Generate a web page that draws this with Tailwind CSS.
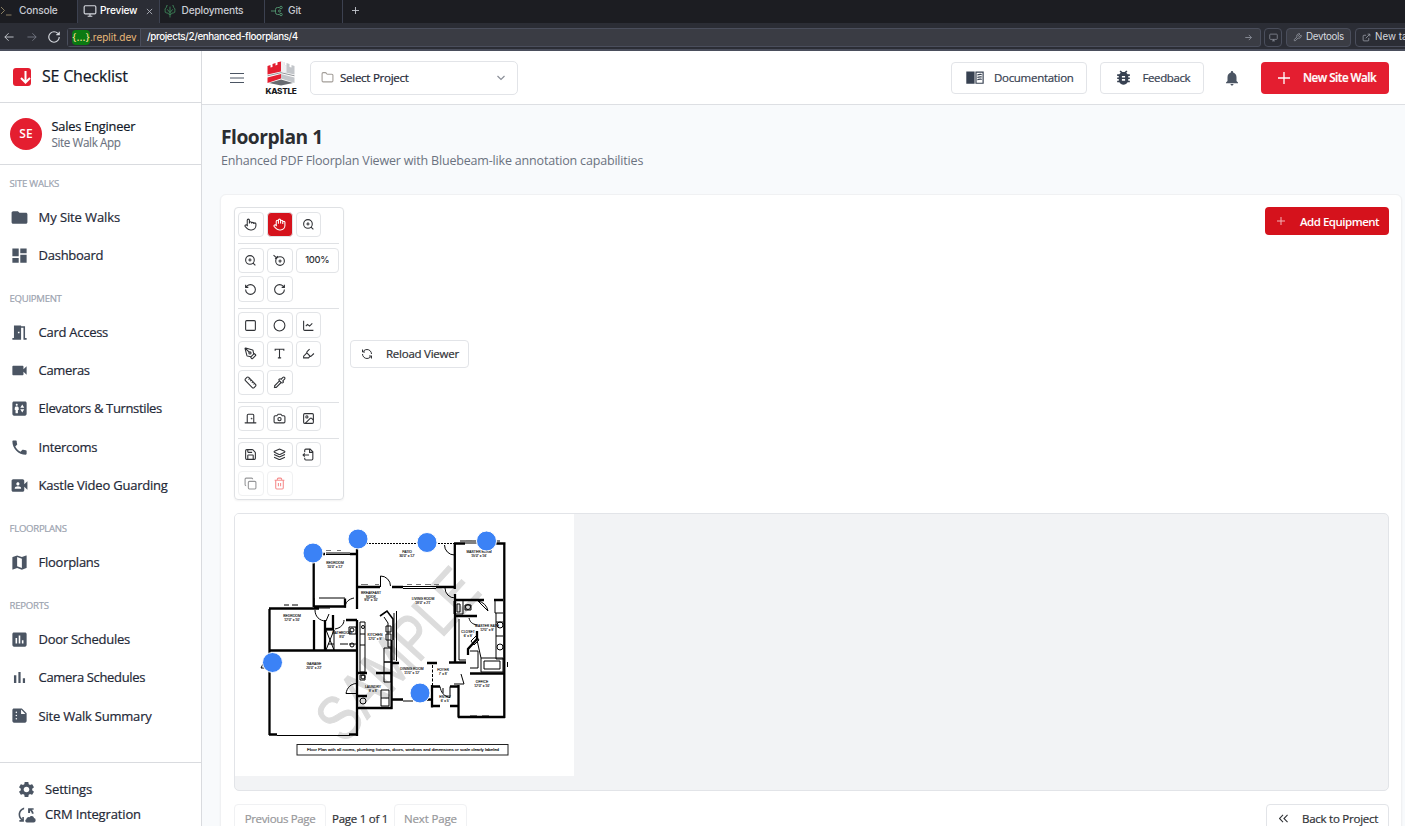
<!DOCTYPE html>
<html lang="en">
<head>
<meta charset="utf-8">
<title>SE Checklist</title>
<script src="https://cdn.jsdelivr.net/npm/@tailwindcss/browser@4"></script>
</head>
<body class="h-[826px] w-[1405px] overflow-hidden bg-white font-['Open_Sans',sans-serif] text-[#1f2937]">
<svg class="hidden">
  <symbol id="folder" viewBox="0 0 24 24"><path d="M10 4H4c-1.1 0-1.99.9-1.99 2L2 18c0 1.1.9 2 2 2h16c1.1 0 2-.9 2-2V8c0-1.1-.9-2-2-2h-8l-2-2z"/></symbol>
  <symbol id="dash" viewBox="0 0 24 24"><path d="M3 13h8V3H3v10zm0 8h8v-6H3v6zm10 0h8V11h-8v10zm0-18v6h8V3h-8z"/></symbol>
  <symbol id="room" viewBox="0 0 24 24"><path d="M14 6v15H3v-2h2V3h9v1h5v15h2v2h-4V6h-3zm-4 5v2h2v-2h-2z"/></symbol>
  <symbol id="cam" viewBox="0 0 24 24"><path d="M17 10.5V7c0-.55-.45-1-1-1H4c-.55 0-1 .45-1 1v10c0 .55.45 1 1 1h12c.55 0 1-.45 1-1v-3.5l4 4v-11l-4 4z"/></symbol>
  <symbol id="elev" viewBox="0 0 24 24"><path d="M19 3H5c-1.1 0-2 .9-2 2v14c0 1.1.9 2 2 2h14c1.1 0 2-.9 2-2V5c0-1.1-.9-2-2-2zM8.5 6c.69 0 1.25.56 1.25 1.25S9.19 8.5 8.5 8.5s-1.25-.56-1.25-1.25S7.81 6 8.5 6zM11 14h-1v4H7v-4H6v-2.5c0-1.1.9-2 2-2h1c1.1 0 2 .9 2 2V14zm4.5 3L13 13h5l-2.5 4zM13 11l2.5-4 2.5 4h-5z"/></symbol>
  <symbol id="phone" viewBox="0 0 24 24"><path d="M6.62 10.79c1.44 2.83 3.76 5.14 6.59 6.59l2.2-2.2c.27-.27.67-.36 1.02-.24 1.12.37 2.33.57 3.57.57.55 0 1 .45 1 1V20c0 .55-.45 1-1 1-9.39 0-17-7.61-17-17 0-.55.45-1 1-1h3.5c.55 0 1 .45 1 1 0 1.25.2 2.45.57 3.57.11.35.03.74-.25 1.02l-2.2 2.2z"/></symbol>
  <symbol id="guard" viewBox="0 0 24 24"><path d="M18 10.48V6c0-1.1-.9-2-2-2H4c-1.1 0-2 .9-2 2v12c0 1.1.9 2 2 2h12c1.1 0 2-.9 2-2v-4.48l4 3.98v-11l-4 3.98zM10 8c1.1 0 2 .9 2 2s-.9 2-2 2-2-.9-2-2 .9-2 2-2zm4 8H6v-.57c0-.81.48-1.53 1.22-1.85a6.95 6.95 0 0 1 5.56 0A2.01 2.01 0 0 1 14 15.43V16z"/></symbol>
  <symbol id="map" viewBox="0 0 24 24"><path d="M20.5 3l-.16.03L15 5.1 9 3 3.36 4.9c-.21.07-.36.25-.36.48V20.5c0 .28.22.5.5.5l.16-.03L9 18.9l6 2.1 5.64-1.9c.21-.07.36-.25.36-.48V3.5c0-.28-.22-.5-.5-.5zM15 19l-6-2.11V5l6 2.11V19z"/></symbol>
  <symbol id="assess" viewBox="0 0 24 24"><path d="M19 3H5c-1.1 0-2 .9-2 2v14c0 1.1.9 2 2 2h14c1.1 0 2-.9 2-2V5c0-1.1-.9-2-2-2zM9 17H7v-7h2v7zm4 0h-2V7h2v10zm4 0h-2v-4h2v4z"/></symbol>
  <symbol id="bars" viewBox="0 0 24 24"><path d="M5 9.2h3V19H5zM10.6 5h2.8v14h-2.8zm5.6 8H19v6h-2.8z"/></symbol>
  <symbol id="sum" viewBox="0 0 24 24"><path d="M15 3H5c-1.1 0-1.99.9-1.99 2L3 19c0 1.1.89 2 1.99 2H19c1.1 0 2-.9 2-2V9l-6-6zM8 17c-.55 0-1-.45-1-1s.45-1 1-1 1 .45 1 1-.45 1-1 1zm0-4c-.55 0-1-.45-1-1s.45-1 1-1 1 .45 1 1-.45 1-1 1zm0-4c-.55 0-1-.45-1-1s.45-1 1-1 1 .45 1 1-.45 1-1 1zm6 1V4.500l5.500 5.500H14z"/></symbol>
  <symbol id="gear" viewBox="0 0 24 24"><path d="M19.14 12.94c.04-.3.06-.61.06-.94 0-.32-.02-.64-.07-.94l2.03-1.58c.18-.14.23-.41.12-.61l-1.92-3.32c-.12-.22-.37-.29-.59-.22l-2.39.96c-.5-.38-1.03-.7-1.62-.94l-.36-2.54c-.04-.24-.24-.41-.48-.41h-3.840c-.24 0-.43.17-.47.41l-.36 2.540c-.59.24-1.130.57-1.620.94l-2.390-.96c-.22-.08-.47 0-.59.22L2.740 8.870c-.12.21-.08.47.12.61l2.030 1.580c-.05.3-.09.63-.09.94s.02.64.07.94l-2.030 1.580c-.18.14-.23.41-.12.61l1.920 3.320c.12.22.37.29.59.22l2.390-.96c.5.38 1.030.7 1.620.94l.36 2.540c.05.24.24.41.48.41h3.840c.24 0 .44-.17.47-.41l.36-2.540c.59-.24 1.130-.56 1.620-.94l2.390.96c.22.08.47 0 .59-.22l1.920-3.320c.12-.22.07-.47-.12-.61l-2.010-1.580zM12 15.600c-1.980 0-3.600-1.620-3.600-3.600s1.620-3.600 3.600-3.600 3.600 1.620 3.600 3.600-1.620 3.600-3.600 3.600z"/></symbol>
  <symbol id="crm" viewBox="0 0 24 24"><path d="M9 3v2.500C6 6.500 4 9 4 12c0 2.500 1.200 4.300 2.700 5.600V15h2v6H3v-2h2.300C3.300 17.500 2 15 2 12 2 7.500 5 4.200 9 3zM14 4h7v2h-2.500c1.500 1.300 2.500 2.800 2.500 5h-2.200c-.2-1.800-1-3.200-2.300-4.200V10h-2.500zM21.500 16.500a3 3 0 0 0-5.700-1 3 3 0 0 0-4 2.600A2 2 0 0 0 12.500 22h8.500a2.800 2.800 0 0 0 .5-5.500z"/></symbol>
  <symbol id="book" viewBox="0 0 24 24"><path d="M1 4.500h10.500V20H1zM12.500 4.500H23V20H12.500zM14 6v12.500h7.500V6z" fill-rule="evenodd"/><path d="M15 8c2-.8 3.500-.9 5.500-.5v1.600c-2-.4-3.500-.3-5.500.5zM15 11c2-.8 3.500-.9 5.500-.5v1.600c-2-.4-3.500-.3-5.500.5zM15 14c2-.8 3.500-.9 5.500-.5v1.600c-2-.4-3.500-.3-5.500.5z"/></symbol>
  <symbol id="bug" viewBox="0 0 24 24"><path d="M20 8h-2.810c-.45-.78-1.070-1.450-1.820-1.960L17 4.410 15.590 3l-2.170 2.170C12.960 5.060 12.490 5 12 5c-.49 0-.96.06-1.410.17L8.410 3 7 4.410l1.620 1.630C7.880 6.550 7.260 7.220 6.810 8H4v2h2.090c-.05.33-.09.66-.09 1v1H4v2h2v1c0 .34.04.67.09 1H4v2h2.810c1.040 1.790 2.970 3 5.190 3s4.150-1.210 5.190-3H20v-2h-2.090c.05-.33.09-.66.09-1v-1h2v-2h-2v-1c0-.34-.04-.67-.09-1H20V8zm-6 8h-4v-2h4v2zm0-4h-4v-2h4v2z"/></symbol>
  <symbol id="bell" viewBox="0 0 24 24"><path d="M12 22c1.100 0 2-.9 2-2h-4c0 1.100.89 2 2 2zm6-6v-5c0-3.070-1.640-5.640-4.500-6.320V4c0-.83-.67-1.500-1.500-1.500s-1.500.67-1.500 1.500v.68C7.630 5.360 6 7.920 6 11v5l-2 2v1h16v-1l-2-2z"/></symbol>

  <symbol id="pointer" viewBox="0 0 24 24"><path d="M18 11v-1a2 2 0 0 0-2-2 2 2 0 0 0-2 2M14 10V9a2 2 0 0 0-2-2 2 2 0 0 0-2 2v1M10 9.500V4a2 2 0 0 0-2-2 2 2 0 0 0-2 2v10M18 11a2 2 0 1 1 4 0v3a8 8 0 0 1-8 8h-2c-2.800 0-4.500-.86-5.990-2.340l-3.600-3.600a2 2 0 0 1 2.830-2.820L7 15"/></symbol>
  <symbol id="hand" viewBox="0 0 24 24"><path d="M18 11V6a2 2 0 0 0-4 0M14 10V4a2 2 0 0 0-4 0v2M10 10.500V6a2 2 0 0 0-4 0v8M18 8a2 2 0 1 1 4 0v6a8 8 0 0 1-8 8h-2c-2.800 0-4.500-.86-5.990-2.340l-3.600-3.600a2 2 0 0 1 2.830-2.820L7 15"/></symbol>
  <symbol id="zoomin" viewBox="0 0 24 24"><circle cx="11" cy="11" r="8"/><path d="m21 21-4.350-4.350M11 8v6M8 11h6"/></symbol>
  <symbol id="zoomout" viewBox="0 0 24 24"><circle cx="13" cy="13" r="8"/><path d="M1 2l6.500 6M4 9l5-5M13 10v6M10 13h6"/></symbol>
  <symbol id="ccw" viewBox="0 0 24 24"><path d="M3 12a9 9 0 1 0 9-9 9.750 9.750 0 0 0-6.740 2.740L3 8M3 3v5h5"/></symbol>
  <symbol id="cw" viewBox="0 0 24 24"><path d="M21 12a9 9 0 1 1-9-9c2.520 0 4.930 1 6.740 2.740L21 8M21 3v5h-5"/></symbol>
  <symbol id="square" viewBox="0 0 24 24"><rect x="3" y="3" width="18" height="18" rx="2"/></symbol>
  <symbol id="circle" viewBox="0 0 24 24"><circle cx="12" cy="12" r="10"/></symbol>
  <symbol id="chart" viewBox="0 0 24 24"><path d="M3 3v16a2 2 0 0 0 2 2h16M7 13l3-3 4 3 5-5"/></symbol>
  <symbol id="pen" viewBox="0 0 24 24"><path d="M15.700 21.300a1 1 0 0 1-1.400 0l-1.600-1.600a1 1 0 0 1 0-1.400l5.600-5.600a1 1 0 0 1 1.400 0l1.600 1.600a1 1 0 0 1 0 1.400zM18 13l-1.400-6.900a1 1 0 0 0-.7-.7L3.200 2a1 1 0 0 0-1.200 1.200l3.400 12.700a1 1 0 0 0 .7.700L13 18M2.300 2.300l7.300 7.300"/><circle cx="11" cy="11" r="2"/></symbol>
  <symbol id="type" viewBox="0 0 24 24"><path d="M4 7V4h16v3M9 20h6M12 4v16"/></symbol>
  <symbol id="high" viewBox="0 0 24 24"><path d="m9 11-6 6v3h9l3-3M22 12l-4.600 4.600a2 2 0 0 1-2.800 0l-5.200-5.200a2 2 0 0 1 0-2.800L14 4"/></symbol>
  <symbol id="ruler" viewBox="0 0 24 24"><path d="M21.300 15.300a2.400 2.400 0 0 1 0 3.400l-2.600 2.600a2.400 2.400 0 0 1-3.400 0L2.700 8.700a2.400 2.400 0 0 1 0-3.400l2.600-2.600a2.400 2.400 0 0 1 3.400 0zM14.500 12.500l2-2M11.500 9.500l2-2M8.500 6.500l2-2M17.500 15.500l2-2"/></symbol>
  <symbol id="pip" viewBox="0 0 24 24"><path d="m2 22 1-1h3l9-9M3 21v-3l9-9M15 6l3.400-3.400a2.100 2.100 0 1 1 3 3L18 9l.4.4a2.100 2.100 0 1 1-3 3l-3.800-3.800a2.100 2.100 0 1 1 3-3z"/></symbol>
  <symbol id="door" viewBox="0 0 24 24"><path d="M18 20V6a2 2 0 0 0-2-2H8a2 2 0 0 0-2 2v14M2 20h20" stroke-linecap="round"/><circle cx="14" cy="12" r=".6"/></symbol>
  <symbol id="photo" viewBox="0 0 24 24"><path d="M14.500 4h-5L7 7H4a2 2 0 0 0-2 2v9a2 2 0 0 0 2 2h16a2 2 0 0 0 2-2V9a2 2 0 0 0-2-2h-3z"/><circle cx="12" cy="13" r="3"/></symbol>
  <symbol id="image" viewBox="0 0 24 24"><rect x="3" y="3" width="18" height="18" rx="2"/><circle cx="9" cy="9" r="2"/><path d="m21 15-3.100-3.100a2 2 0 0 0-2.800 0L6 21"/></symbol>
  <symbol id="save" viewBox="0 0 24 24"><path d="M15.200 3a2 2 0 0 1 1.400.6l3.800 3.800a2 2 0 0 1 .6 1.400V19a2 2 0 0 1-2 2H5a2 2 0 0 1-2-2V5a2 2 0 0 1 2-2zM17 21v-7a1 1 0 0 0-1-1H8a1 1 0 0 0-1 1v7M7 3v4a1 1 0 0 0 1 1h7"/></symbol>
  <symbol id="layers" viewBox="0 0 24 24"><path d="m12.800 2.200a2 2 0 0 0-1.600 0L2.600 6.100a1 1 0 0 0 0 1.800l8.600 3.900a2 2 0 0 0 1.600 0l8.600-3.900a1 1 0 0 0 0-1.800zM22 12l-9.200 4.200a2 2 0 0 1-1.600 0L2 12M22 17l-9.200 4.200a2 2 0 0 1-1.600 0L2 17"/></symbol>
  <symbol id="export" viewBox="0 0 24 24"><path d="M5 8V4a2 2 0 0 1 2-2h8l5 5v13a2 2 0 0 1-2 2H7a2 2 0 0 1-2-2v-2M14 2v6h6M13 13H2M5 10l-3 3 3 3"/></symbol>
  <symbol id="copy" viewBox="0 0 24 24"><rect x="8" y="8" width="14" height="14" rx="2"/><path d="M4 16a2 2 0 0 1-2-2V4a2 2 0 0 1 2-2h10a2 2 0 0 1 2 2"/></symbol>
  <symbol id="trash" viewBox="0 0 24 24"><path d="M3 6h18M19 6v14a2 2 0 0 1-2 2H7a2 2 0 0 1-2-2V6M8 6V4a2 2 0 0 1 2-2h4a2 2 0 0 1 2 2v2M10 11v6M14 11v6"/></symbol>
  <symbol id="refresh" viewBox="0 0 24 24"><path d="M21 12a9 9 0 0 0-9-9 9.750 9.750 0 0 0-6.740 2.740L3 8M3 3v5h5M3 12a9 9 0 0 0 9 9 9.750 9.750 0 0 0 6.740-2.740L21 16M16 16h5v5"/></symbol>
  <symbol id="ofolder" viewBox="0 0 24 24"><path d="M20 20a2 2 0 0 0 2-2V8a2 2 0 0 0-2-2h-7.900a2 2 0 0 1-1.700-.9l-.8-1.200A2 2 0 0 0 7.900 3H4a2 2 0 0 0-2 2v13a2 2 0 0 0 2 2z"/></symbol>
  <symbol id="monitor" viewBox="0 0 24 24"><rect x="2" y="3" width="20" height="14" rx="2"/><path d="M8 21h8M12 17v4"/></symbol>
</svg>

<!-- Workspace tabs -->
<div class="flex h-[23px] bg-[#1c1d22] font-[Inter,sans-serif] text-[10.2px] font-medium tracking-[-0.2px] text-[#c8cbd2]">
  <div class="flex w-[77px] shrink-0 items-center pb-px"><svg class="h-3 w-3 fill-none stroke-[#8a7f62] stroke-2" viewBox="0 0 24 24"><path d="M2 4l7 7-7 7M12 20h11"/></svg><span class="ml-[7px]">Console</span></div>
  <div class="flex w-[83px] shrink-0 items-center border-x border-[#3c4150] bg-[#2b2d35] pb-px text-white"><svg class="ml-[5px] h-[14px] w-[14px] fill-none stroke-[#d5d8de] stroke-2"><use href="#monitor"/></svg><span class="ml-[3px]">Preview</span><svg class="ml-[9px] h-[7px] w-[7px] stroke-[#b0b4bd] stroke-1" viewBox="0 0 8 8"><path d="M1 1l6 6M7 1l-6 6"/></svg></div>
  <div class="flex w-[105px] shrink-0 items-center border-r border-[#3c4150] pb-px"><svg class="ml-[4px] h-[13px] w-3 fill-none stroke-[#3f8a5c] stroke-[1.6]" viewBox="0 0 22 24"><path d="M11 23V3M11 14L6 8M11 14l5-6M11 18l-6-4M11 18l6-4M5 15a4 4 0 0 1-3-5 4 4 0 0 1 2-5 7 7 0 0 1 14 0 4 4 0 0 1 2 5 4 4 0 0 1-3 5"/></svg><span class="ml-[5.500px]">Deployments</span></div>
  <div class="flex w-[78px] shrink-0 items-center border-r border-[#3c4150] pb-px"><svg class="ml-[6px] h-3 w-3 fill-none stroke-[#4f8f6c] stroke-2" viewBox="0 0 24 24"><path d="M0 12h8M17 5h-4a4 4 0 0 0-4 4v6a4 4 0 0 0 4 4h4"/><circle cx="20" cy="5" r="2.500"/><circle cx="20" cy="19" r="2.500"/><circle cx="17" cy="12" r="2"/></svg><span class="ml-[5px]">Git</span></div>
  <svg class="mt-[7px] ml-[9px] h-[7px] w-[7px] stroke-[#c8cbd2] stroke-1" viewBox="0 0 8 8"><path d="M4 0v8M0 4h8"/></svg>
</div>
<!-- Address bar -->
<div class="flex h-7 items-center overflow-hidden border-b-2 border-[#4a4e5c] bg-[#2b2d35] pt-[2px] font-[Inter,sans-serif] text-[9.800px] text-[#d5d8de] [&>*]:shrink-0">
  <svg class="ml-[4px] h-[10px] w-[10px] fill-none stroke-[#d5d8de] stroke-2" viewBox="0 0 24 24"><path d="M23 12H2M11 3l-9 9 9 9"/></svg>
  <svg class="ml-[13px] h-[10px] w-[10px] fill-none stroke-[#7c808b] stroke-2" viewBox="0 0 24 24"><path d="M1 12h21M13 3l9 9-9 9"/></svg>
  <svg class="ml-[10px] h-[14px] w-[14px] fill-none stroke-[#d5d8de] stroke-2"><use href="#cw"/></svg>
  <div class="ml-[6px] flex h-[19px] w-[1194px] items-center rounded-[3px] border border-[#4a4e5c] bg-[#3a3c44]">
    <div class="flex h-full w-[73px] items-center border-r border-[#4a4e5c] bg-[#2b2d35] pt-px pl-[4px] text-[10px] text-[#e8b878]"><span class="rounded-sm bg-[#0b7a12] font-medium text-[#f0dc90]">{...}</span>.replit.dev</div>
    <span class="ml-[6px] pt-px text-[9.800px] font-medium tracking-[-0.370px] text-white">/projects/2/enhanced-floorplans/4</span>
    <svg class="mr-2 ml-auto h-[7px] w-[7px] fill-none stroke-[#8d919c] stroke-3" viewBox="0 0 24 24"><path d="M1 12h21M13 3l9 9-9 9"/></svg>
  </div>
  <div class="ml-[3px] flex h-[19px] w-[18px] items-center justify-center rounded border border-[#4a4e5c]"><svg class="h-[9px] w-[9px] fill-none stroke-[#8d919c] stroke-2"><use href="#monitor"/></svg></div>
  <div class="ml-[4px] flex h-[19px] w-[65px] items-center rounded border border-[#4a4e5c] bg-[#3a3c44] pl-[6px]"><svg class="h-[9px] w-[9px] fill-none stroke-[#a0a4ae] stroke-2" viewBox="0 0 24 24"><path d="M14.700 6.300a1 1 0 0 0 0 1.400l1.600 1.600a1 1 0 0 0 1.400 0l3.800-3.800a6 6 0 0 1-7.900 7.900l-6.900 6.900a2.100 2.100 0 0 1-3-3l6.900-6.900a6 6 0 0 1 7.900-7.900z"/></svg><span class="ml-[4px] tracking-[-0.350px]">Devtools</span></div>
  <div class="ml-[4px] flex h-[19px] w-[70px] items-center rounded border border-[#4a4e5c] pl-[6px] whitespace-nowrap"><svg class="h-[9px] w-[9px] shrink-0 fill-none stroke-[#a0a4ae] stroke-2" viewBox="0 0 24 24"><path d="M18 13v6a2 2 0 0 1-2 2H5a2 2 0 0 1-2-2V8a2 2 0 0 1 2-2h6M15 3h6v6M10 14L21 3"/></svg><span class="ml-[4px]">New tab</span></div>
</div>

<div class="flex h-[775px] overflow-hidden">
  <!-- Sidebar -->
  <aside class="flex w-[202px] shrink-0 flex-col border-r border-[#d9dbdf] bg-white">
    <div class="flex h-[52px] shrink-0 items-center border-b border-[#d9dbdf] pl-[13px]">
      <svg class="h-[18px] w-[18px]" viewBox="0 0 18 18"><rect width="18" height="18" rx="3" fill="#e41e30"/><path d="M12.500 3v11M8 10l4.500 4.500L17 10" fill="none" stroke="#fff" stroke-width="2"/></svg>
      <span class="ml-[11px] pb-[2px] text-[16px] font-medium tracking-[-0.2px] text-[#111827] [-webkit-text-stroke:0.2px]">SE Checklist</span>
    </div>
    <div class="flex h-[62px] shrink-0 items-center border-b border-[#d9dbdf] pl-[10px]">
      <div class="flex h-8 w-8 items-center justify-center rounded-full bg-[#e41e30] text-[12px] font-semibold text-white">SE</div>
      <div class="ml-[9.500px] pt-px"><div class="text-[12.800px] leading-[17px] font-medium tracking-[-0.2px] text-[#111827] [-webkit-text-stroke:0.2px]">Sales Engineer</div><div class="text-[11.700px] leading-[15.500px] tracking-[-0.4px] text-[#6b7280] [-webkit-text-stroke:0.1px]">Site Walk App</div></div>
    </div>
    <nav class="flex h-[598px] shrink-0 flex-col border-b border-[#d9dbdf] pt-[12.500px] pl-[9.600px] text-[13px] font-medium tracking-[-0.27px] [-webkit-text-stroke:0.2px]">
      <div class="flex h-[14px] items-center text-[9.600px] text-[#9ca3af]">SITE WALKS</div>
      <div class="mt-[7px] mb-[17.400px] [&>div]:flex [&>div]:h-[38.300px] [&>div]:items-center [&>div]:gap-[10px] [&_svg]:-mt-px [&_svg]:h-[19px] [&_svg]:w-[19px] [&_svg]:fill-[#4b5563]">
        <div><svg><use href="#folder"/></svg><span class="tracking-[-0.100px]">My Site Walks</span></div>
        <div><svg><use href="#dash"/></svg>Dashboard</div>
      </div>
      <div class="flex h-[14px] items-center text-[9.600px] tracking-[-0.300px] text-[#9ca3af]">EQUIPMENT</div>
      <div class="mt-[7px] mb-[17.400px] [&>div]:flex [&>div]:h-[38.300px] [&>div]:items-center [&>div]:gap-[10px] [&_svg]:-mt-px [&_svg]:h-[19px] [&_svg]:w-[19px] [&_svg]:fill-[#4b5563]">
        <div><svg><use href="#room"/></svg>Card Access</div>
        <div><svg><use href="#cam"/></svg><span class="tracking-[-0.350px]">Cameras</span></div>
        <div><svg><use href="#elev"/></svg><span class="tracking-[-0.350px]">Elevators &amp; Turnstiles</span></div>
        <div><svg><use href="#phone"/></svg>Intercoms</div>
        <div><svg><use href="#guard"/></svg><span class="tracking-[-0.220px]">Kastle Video Guarding</span></div>
      </div>
      <div class="mt-[0.300px] flex h-[14px] items-center text-[9.600px] tracking-[-0.300px] text-[#9ca3af]">FLOORPLANS</div>
      <div class="mt-[7px] mb-[17.400px] [&>div]:flex [&>div]:h-[38.300px] [&>div]:items-center [&>div]:gap-[10px] [&_svg]:-mt-px [&_svg]:h-[19px] [&_svg]:w-[19px] [&_svg]:fill-[#4b5563]">
        <div><svg><use href="#map"/></svg>Floorplans</div>
      </div>
      <div class="mt-[0.300px] flex h-[14px] items-center text-[9.600px] text-[#9ca3af]">REPORTS</div>
      <div class="mt-[7px] [&>div]:flex [&>div]:h-[38.300px] [&>div]:items-center [&>div]:gap-[10px] [&_svg]:-mt-px [&_svg]:h-[19px] [&_svg]:w-[19px] [&_svg]:fill-[#4b5563]">
        <div><svg><use href="#assess"/></svg>Door Schedules</div>
        <div><svg><use href="#bars"/></svg><span class="tracking-[-0.350px]">Camera Schedules</span></div>
        <div><svg><use href="#sum"/></svg><span class="tracking-[-0.220px]">Site Walk Summary</span></div>
      </div>
    </nav>
    <div class="pt-[14px] pl-[16.500px] text-[13px] font-medium tracking-[-0.150px] [-webkit-text-stroke:0.2px] [&>div]:flex [&>div]:h-[25.300px] [&>div]:items-center [&>div]:gap-[9.500px] [&_svg]:-mt-px [&_svg]:h-[19px] [&_svg]:w-[19px] [&_svg]:fill-[#4b5563]">
      <div><svg><use href="#gear"/></svg>Settings</div>
      <div><svg><use href="#crm"/></svg>CRM Integration</div>
    </div>
  </aside>

  <main class="flex min-w-0 flex-1 flex-col overflow-hidden bg-[#f8fafc]">
    <header class="flex h-[54px] shrink-0 items-center border-b border-[#dddfe3] bg-white pr-4 pl-[28px] text-[11.500px] font-medium tracking-[-0.300px] text-[#374151] [-webkit-text-stroke:0.2px]">
      <svg class="h-[10px] w-[14px] stroke-[#4b5563]" viewBox="0 0 14 10"><path d="M0 .5h14M0 5h14M0 9.500h14"/></svg>
      <svg class="ml-[21px] h-9 w-8" viewBox="0 0 32 36">
        <path fill="#e41e30" d="M2.500 6l3-1v2.500l2-.6V4l3-1v2.500l2-.7V2.200L16 1.500v10L2.500 14.500zM2.500 17.500L16 14v4.500L2.500 23z"/>
        <path fill="#c3c6ca" d="M29.500 6l-3-1v2.500l-2-.6V4l-3-1v2.500l-2-.7V2.200L16 1.500v10l13.500 3zM29.500 17.500L16 14v4.500L29.500 23z"/>
        <path fill="#f0f0f2" d="M16 1.500l3.500.700v2.600l2 .7v7.200l-5.500-1.200z"/>
        <path fill="#666a70" d="M4 23L16 19.500 28 23l-12 2.500z"/>
        <path stroke="#777b80" stroke-width=".8" fill="none" d="M2.500 15.800L16 12.700l13.500 3.100"/>
        <text x="16" y="33.500" text-anchor="middle" font-family="Inter" font-weight="800" font-size="7.600" textLength="31" lengthAdjust="spacingAndGlyphs" fill="#18181b">KASTLE</text>
      </svg>
      <div class="ml-[13px] flex h-[34px] w-[208px] items-center rounded-[5px] border border-[#e2e4e8] pr-[12px] pl-[10px] text-[#1f2937]"><svg class="h-[13px] w-[13px] fill-none stroke-[#a29d98] stroke-2"><use href="#ofolder"/></svg><span class="ml-[6px] text-[11.600px] tracking-[-0.300px]">Select Project</span><svg class="ml-auto h-2 w-2 fill-none stroke-[#8b8f98] stroke-[1.200]" viewBox="0 0 8 8"><path d="M.5 2L4 5.500 7.500 2"/></svg></div>
      <div class="ml-auto flex h-8 w-[136px] items-center rounded border border-[#e2e4e8] pl-[13px]"><svg class="h-[19px] w-[20px] fill-[#374151]"><use href="#book"/></svg><span class="ml-[9px]">Documentation</span></div>
      <div class="ml-[13px] flex h-8 w-[104px] items-center rounded border border-[#e2e4e8] pl-[12.500px]"><svg class="h-[19px] w-[19px] fill-[#374151]"><use href="#bug"/></svg><span class="ml-[10px] tracking-[-0.400px]">Feedback</span></div>
      <svg class="ml-[19px] h-[18px] w-[18px] fill-[#4b5563]"><use href="#bell"/></svg>
      <div class="ml-[20px] flex h-8 w-32 items-center rounded bg-[#e41e30] pl-[17px] text-[11.600px] font-semibold tracking-[-0.500px] whitespace-nowrap text-white"><svg class="h-3 w-3 stroke-white" viewBox="0 0 12 12"><path d="M6 0v12M0 6h12" stroke-width="1.300"/></svg><span class="ml-[13px]">New Site Walk</span></div>
    </header>
    <div class="pt-[19px] pl-[18px]">
      <h1 class="pl-px text-[19.200px] leading-[26px] font-bold tracking-[-0.480px] text-[#2b2d31]">Floorplan 1</h1>
      <p class="mt-px pl-px text-[12.500px] leading-[20px] tracking-[-0.180px] text-[#6b7280]">Enhanced PDF Floorplan Viewer with Bluebeam-like annotation capabilities</p>
      <section class="mt-[23.400px] h-[700px] w-[1182px] rounded-md border border-[#f0f1f3] bg-white px-[13px] pt-[12px] shadow-xs">
        <div class="flex w-[1155px] justify-between">
          <div class="flex items-center gap-[6px]">
            <div class="flex w-[110px] flex-col gap-[3.200px] rounded border border-[#dfe1e4] p-[3.200px] pr-[4px] text-[#303236] shadow-xs [&_svg]:h-[13px] [&_svg]:w-[13px] [&_svg]:fill-none [&_svg]:stroke-current [&_svg]:stroke-2 [&>div]:flex [&>div]:flex-wrap [&>div]:gap-[3.200px] [&>div]:border-[#dfe1e4] [&>div>div]:flex [&>div>div]:h-[25.600px] [&>div>div]:w-[25.600px] [&>div>div]:items-center [&>div>div]:justify-center [&>div>div]:rounded [&>div>div]:border [&>div>div]:border-[#e2e4e7]">
              <div class="border-b pb-[6.200px]"><div><svg><use href="#pointer"/></svg></div><div class="bg-[#d5121c] text-white"><svg><use href="#hand"/></svg></div><div><svg><use href="#zoomin"/></svg></div></div>
              <div class="border-b pb-[6.200px]"><div><svg><use href="#zoomin"/></svg></div><div><svg><use href="#zoomout"/></svg></div><div class="min-w-[43px] font-[Inter,sans-serif] text-[9.400px] font-medium tracking-[-0.3px]">100%</div><div><svg><use href="#ccw"/></svg></div><div><svg><use href="#cw"/></svg></div></div>
              <div class="border-b pb-[6.200px]"><div><svg><use href="#square"/></svg></div><div><svg><use href="#circle"/></svg></div><div><svg><use href="#chart"/></svg></div><div><svg><use href="#pen"/></svg></div><div><svg><use href="#type"/></svg></div><div><svg><use href="#high"/></svg></div><div><svg><use href="#ruler"/></svg></div><div><svg><use href="#pip"/></svg></div></div>
              <div class="border-b pb-[6.200px]"><div><svg><use href="#door"/></svg></div><div><svg><use href="#photo"/></svg></div><div><svg><use href="#image"/></svg></div></div>
              <div><div><svg><use href="#save"/></svg></div><div><svg><use href="#layers"/></svg></div><div><svg><use href="#export"/></svg></div><div class="opacity-50"><svg><use href="#copy"/></svg></div><div class="opacity-50"><svg class="text-[#ef2020]"><use href="#trash"/></svg></div></div>
            </div>
            <div class="flex h-7 w-[119px] items-center rounded border border-[#e2e4e8] pl-[10px] text-[11.500px] font-medium whitespace-nowrap text-[#303236] [-webkit-text-stroke:0.2px]"><svg class="h-[12px] w-[12px] fill-none stroke-[#303236] stroke-2"><use href="#refresh"/></svg><span class="ml-[13px] tracking-[-0.250px]">Reload Viewer</span></div>
          </div>
          <div class="flex h-7 w-[124px] items-center rounded bg-[#d5121c] pl-[12px] text-[11.500px] font-semibold tracking-[-0.500px] whitespace-nowrap text-white"><svg class="h-2 w-2 stroke-[#f3b3b6]" viewBox="0 0 8 8"><path d="M4 0v8M0 4h8"/></svg><span class="ml-[15px]">Add Equipment</span></div>
        </div>
        <div class="mt-[12.600px] h-[278px] w-[1155px] overflow-hidden rounded-[5px] border border-[#e2e4e8] bg-[#f2f3f5]">
          <svg class="h-[262px] w-[339px] bg-white" viewBox="235 514 339 262" fill="none" stroke="#000" font-family="Liberation Sans">
            <text transform="translate(344 745) rotate(-47.500)" font-size="64" textLength="206" lengthAdjust="spacingAndGlyphs" fill="#dcdcdc" stroke="#dcdcdc" stroke-width="1">SAMPLE</text>
            <g stroke-width="2.300">
              <path d="M313.700 607V554H325M350 554h7M357 543v66M357 587h23M392 587h11M436 587h19M454.800 543v46M454 543.500h11M484 543.500h21.500M504.300 543v175M503 600h-9M484 600h-30M455 594v68M269.500 609v126M269 608.500h50M269 650.500h88M357 620v116M269 734.500h8M349 734.500h8M357 708h35.500M391.600 640v69M392 699.500h11M413 699.500h19M432 685v22.500M432 706h8M450 706h9M458.500 685v32.500M458 717h47M432 686.500h8M450 686.500h9M470 673.500h35M314 606.500h31v-8M346 620h11M333 615v14h-8M314 620v30M325 620v30M391 663h8M427 663h10M449 662.500h17M357 673h10M376 673h16M357 696h10M455 616h22M477 631v8l-9 10v6"/>
              <path d="M380 616l7-5 6 8v21" stroke-width="1.600"/>
            </g>
            <g stroke-width="1">
              <path stroke-dasharray="2 1" d="M357 543.500h98"/><path stroke-dasharray="3 1.500" d="M432.500 665v20"/>
              <path d="M277 735.500h73M319 598h26M314 598v8M318 608h12M326 554.500h24M326 553h24M465 543h19M284 605h5M292 605h6M403 588.500h33M403 586.500h33M403 701h10M443 688v5M460 541h40"/>
              <path stroke="#777" d="M326 550.500h5M337 550.500h4M361 584.500h7M375 584.500h4M407 584.500h5M416 584.500h5M425 584.500h6M434 584.500h5M466 540.500h6M478 540.500h6"/>
              <path d="M380.500 587v-11a10 10 0 0 1 10 10M454.500 555a10 10 0 0 1-10-10M455 598a10 10 0 0 1-10-10M345 608c0-6 4-9 9-10M315 610c0 6 4 11 11 11l3-7M344 620c0 4-3 8-9 9M488 611a13 13 0 0 0-10-10l10 10M357 683.500c-6 0-10 4-11 10h10M440 686.500c1 6 4 10 10 11v-11M454 684h10l-3-10M469 618c1 4 3 6 8 7M266 658l-5 10h8"/>
              <path d="M326 630h8v20M326 630l8 20M334 630l-8 20M349 627h7v7h-7zM349 644h7M360 622h5v50h-5zM360 634h5M360 645h5M384 617l4 6v24h4M386 626h5v6h-5zM386 634h5v6h-5zM394 613v47M396.500 611v50M384 648h7v14h-7zM384 662h7v20h-7zM360 675h5v5h-5zM381 690h8v16h-8zM381 698h8M454 601v13h9v-13M457 604h3v8h-3zM465 605h6v5h-6v-5M495 601v12h8M496 613v9h7M496 622v37h8M496 636h7M481 658h22v14h-22zM484 661h16v8h-16zM459 619v41h7M477 640l4 18M470 651h8v17h-8M471 641l5-5 3 4-5 5zM328 644h6M340 644h8"/>
              <circle cx="363" cy="701" r="3"/><circle cx="352" cy="630" r="2"/><circle cx="352" cy="645" r="2"/><circle cx="500" cy="625" r="3"/><circle cx="500" cy="647" r="3"/><circle cx="468" cy="607" r="2.500"/><circle cx="363" cy="627" r="1.500"/><circle cx="363" cy="677" r="2"/>
              <path d="M507.500 662v5M470 716h7M482 716h7"/>
            </g>
            <g fill="#111" stroke="#111" stroke-width=".12" font-size="3.400" text-anchor="middle">
              <text x="335" y="564">BEDROOM</text><text x="335" y="567.500">10'0" x 12'</text>
              <text x="407" y="553">PATIO</text><text x="407" y="556.500">30'0" x 12'</text>
              <text x="479" y="553">MASTER BDRM</text><text x="479" y="556.500">15'0" x 16'</text>
              <text x="371" y="594">BREAKFAST</text><text x="371" y="597.500">NOOK</text><text x="371" y="601">9'0" x 10'</text>
              <text x="423" y="600">LIVING ROOM</text><text x="423" y="603.500">18'0" x 21'</text>
              <text x="292" y="617">BEDROOM</text><text x="292" y="620.500">12'0" x 10'</text>
              <text x="342" y="634">BATHROOM</text><text x="342" y="637.500">8'0"</text>
              <text x="375" y="636">KITCHEN</text><text x="375" y="639.500">12'0" x 9'</text>
              <text x="487" y="627">MASTER BATH</text><text x="487" y="630.500">12'0" x 9'</text>
              <text x="468" y="633">CLOSET</text><text x="468" y="636.500">6' x 9'</text>
              <text x="314" y="665">GARAGE</text><text x="314" y="668.500">20'0" x 22'</text>
              <text x="412" y="670">DINING ROOM</text><text x="412" y="673.500">11'0" x 12'</text>
              <text x="443" y="671">FOYER</text><text x="443" y="674.500">7' x 8'</text>
              <text x="373" y="688">LAUNDRY</text><text x="373" y="691.500">9' x 8'</text>
              <text x="482" y="683">OFFICE</text><text x="482" y="686.500">12'0" x 10'</text>
              <text x="445" y="698">ENTRY</text><text x="445" y="701.500">6' x 5'</text>
            </g>
            <rect x="297" y="744.500" width="211" height="10.500" stroke="#222" stroke-width="1"/>
            <text x="307" y="750.600" font-size="4.200" fill="#000" stroke="#000" stroke-width=".12" textLength="192" lengthAdjust="spacingAndGlyphs">Floor Plan with all rooms, plumbing fixtures, doors, windows and dimensions or scale clearly labeled</text>
            <g fill="#3b82f6" stroke="#fff" stroke-width="1">
              <circle cx="313" cy="553" r="10"/><circle cx="358" cy="539" r="10"/><circle cx="427" cy="542.500" r="10"/><circle cx="486.500" cy="541" r="10"/><circle cx="272.500" cy="662.500" r="10"/><circle cx="420" cy="693" r="10"/>
            </g>
          </svg>
        </div>
        <div class="mt-[13px] flex w-[1155px] items-center text-[11.500px] font-medium whitespace-nowrap text-[#303236] [-webkit-text-stroke:0.2px]">
          <div class="flex h-[30px] w-[92px] items-center justify-center rounded border border-[#f0f1f3] tracking-[-0.350px] text-[#97989b]">Previous Page</div>
          <span class="ml-[6px] w-[56px] tracking-[-0.250px]">Page 1 of 1</span>
          <div class="ml-[6px] flex h-[30px] w-[73px] items-center justify-center rounded border border-[#f0f1f3] tracking-[-0.150px] text-[#97989b]">Next Page</div>
          <div class="ml-auto flex h-[30px] w-[123px] items-center rounded border border-[#e2e4e8] pl-[12px]"><svg class="h-[9px] w-[9px] fill-none stroke-[#303236] stroke-[1.200]" viewBox="0 0 10 10"><path d="M4.500 1l-4 4 4 4M9.500 1l-4 4 4 4"/></svg><span class="ml-[14px] tracking-[-0.250px]">Back to Project</span></div>
        </div>
      </section>
    </div>
  </main>
</div>
</body>
</html>
